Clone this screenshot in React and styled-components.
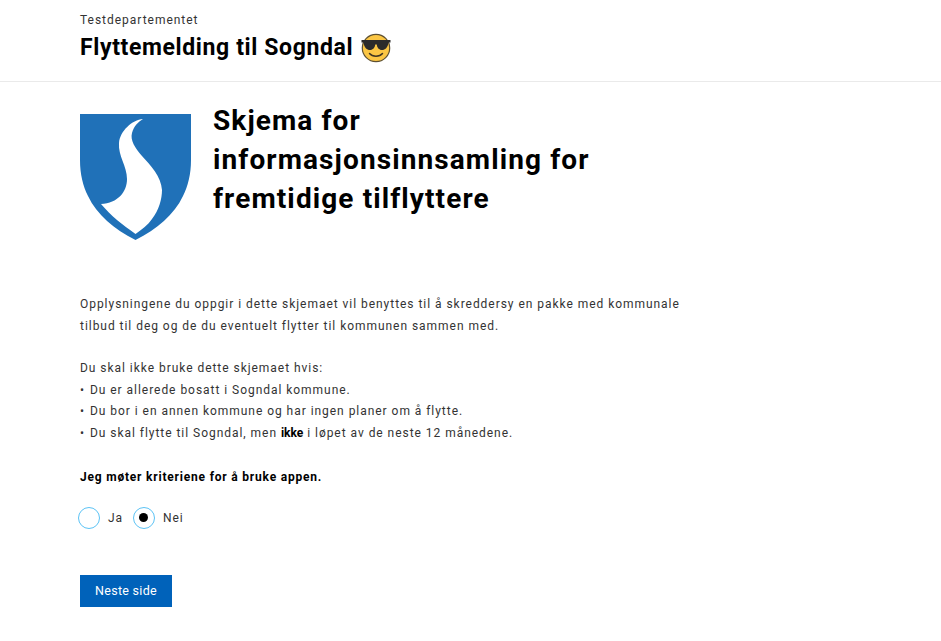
import React from 'react';
import styled, { createGlobalStyle } from 'styled-components';

const Global = createGlobalStyle`
  html, body { margin: 0; padding: 0; background: #fff; }
  body { font-family: Roboto, "Liberation Sans", sans-serif; color: #000; }
`;
const Header = styled.header`
  height: 82px;
  box-sizing: border-box;
  padding: 13px 0 0 80px;
  border-bottom: 1px solid #eaeaea;
`;
const Org = styled.div`
  font-size: 12px;
  line-height: 15px;
  letter-spacing: 0.98px;
  color: #333;
`;
const AppTitle = styled.h1`
  display: flex;
  align-items: center;
  gap: 8px;
  margin: 5px 0 0;
  font-size: 23px;
  line-height: 30px;
  font-weight: 700;
  letter-spacing: 0.62px;
`;
const Main = styled.main`
  padding: 19px 0 0 80px;
  width: 620px;
`;
const Hero = styled.div`
  display: flex;
  align-items: flex-start;
  gap: 22px;
`;
const CrestSlot = styled.div`
  flex: none;
  padding-top: 13px;
  line-height: 0;
`;
const HeroTitle = styled.h2`
  margin: 0;
  width: 400px;
  font-size: 28px;
  line-height: 39px;
  font-weight: 700;
  letter-spacing: 1.1px;
`;
const Paragraph = styled.p`
  margin: ${(p) => p.$top}px 0 0;
  font-size: 12px;
  line-height: 21.6px;
  letter-spacing: 0.96px;
  color: #333;
  white-space: nowrap;
  b { font-weight: 700; color: #000; letter-spacing: 0; }
`;
const Bullet = styled.span`
  margin-right: 1px;
`;
const Question = styled.p`
  margin: 22px 0 0;
  font-size: 12px;
  line-height: 21px;
  font-weight: 700;
  letter-spacing: 0.8px;
`;
const RadioRow = styled.div`
  display: flex;
  align-items: center;
  margin: 19px 0 0 -2px;
  gap: 10px;
`;
const RadioLabel = styled.label`
  display: flex;
  align-items: center;
  gap: 8px;
  font-size: 12px;
  letter-spacing: 0.9px;
  color: #333;
`;
const RadioCircle = styled.span`
  box-sizing: border-box;
  width: 22px;
  height: 22px;
  border: 1.5px solid #5cc3f5;
  border-radius: 50%;
  display: flex;
  align-items: center;
  justify-content: center;
  background: #fff;
  &::after {
    content: '';
    display: ${(p) => (p.$on ? 'block' : 'none')};
    width: 9px;
    height: 9px;
    border-radius: 50%;
    background: #000;
  }
`;
const NextButton = styled.button`
  display: block;
  margin-top: 46px;
  width: 92px;
  height: 32px;
  padding: 0;
  border: 0;
  background: #0062ba;
  color: #fff;
  font-family: inherit;
  font-size: 12.5px;
  letter-spacing: 0.3px;
`;

const Crest = () => (
  <svg width="111" height="127" viewBox="0 0 111 127">
    <path d="M0 0H111V46C111 60 108 72 103 82C94 101 77 115 55.500 126C34 115 17 101 8 82C3 72 0 60 0 46Z" fill="#2071b8" />
    <path d="M63 5C52 6 40 17 39 29C38 42 47 52 47 65C47 78 38 89 21 90C31 102 43 111 55.500 120C62 115 68 111 72 105C79 96 82 85 82 76C81 62 71 52 62 42C55 34 50 26 52 19C54 12 58 8 63 5Z" fill="#fff" />
  </svg>
);

const Emoji = () => (
  <svg width="30" height="30" viewBox="0 0 30 30">
    <circle cx="15" cy="15" r="13.700" fill="#fbc644" stroke="#5d5033" strokeWidth="1.200" />
    <path d="M0.500 7H29.500V9.500H27.500C27 14.500 24 17 21 17C18 17 16 14.500 15.800 11.500H14.200C14 14.500 12 17 9 17C6 17 3 14.500 2.500 9.500H0.500Z" fill="#2b2b2b" />
    <path d="M8.500 20.500C11.500 24 18.500 24 21.500 20.500" fill="none" stroke="#3f3522" strokeWidth="1.500" strokeLinecap="round" />
  </svg>
);

export default function App() {
  return (
    <>
      <Global />
      <Header>
        <Org>Testdepartementet</Org>
        <AppTitle>
          Flyttemelding til Sogndal <Emoji />
        </AppTitle>
      </Header>
      <Main>
        <Hero>
          <CrestSlot>
            <Crest />
          </CrestSlot>
          <HeroTitle>Skjema for informasjonsinnsamling for fremtidige tilflyttere</HeroTitle>
        </Hero>
        <Paragraph $top={53}>
          Opplysningene du oppgir i dette skjemaet vil benyttes til å skreddersy en pakke med kommunale
          <br />
          tilbud til deg og de du eventuelt flytter til kommunen sammen med.
        </Paragraph>
        <Paragraph $top={21}>
          Du skal ikke bruke dette skjemaet hvis:
          <br /><Bullet>•</Bullet> Du er allerede bosatt i Sogndal kommune.
          <br /><Bullet>•</Bullet> Du bor i en annen kommune og har ingen planer om å flytte.
          <br /><Bullet>•</Bullet> Du skal flytte til Sogndal, men <b>ikke</b> i løpet av de neste 12 månedene.
        </Paragraph>
        <Question>Jeg møter kriteriene for å bruke appen.</Question>
        <RadioRow>
          <RadioLabel>
            <RadioCircle />
            Ja
          </RadioLabel>
          <RadioLabel>
            <RadioCircle $on />
            Nei
          </RadioLabel>
        </RadioRow>
        <NextButton>Neste side</NextButton>
      </Main>
    </>
  );
}
